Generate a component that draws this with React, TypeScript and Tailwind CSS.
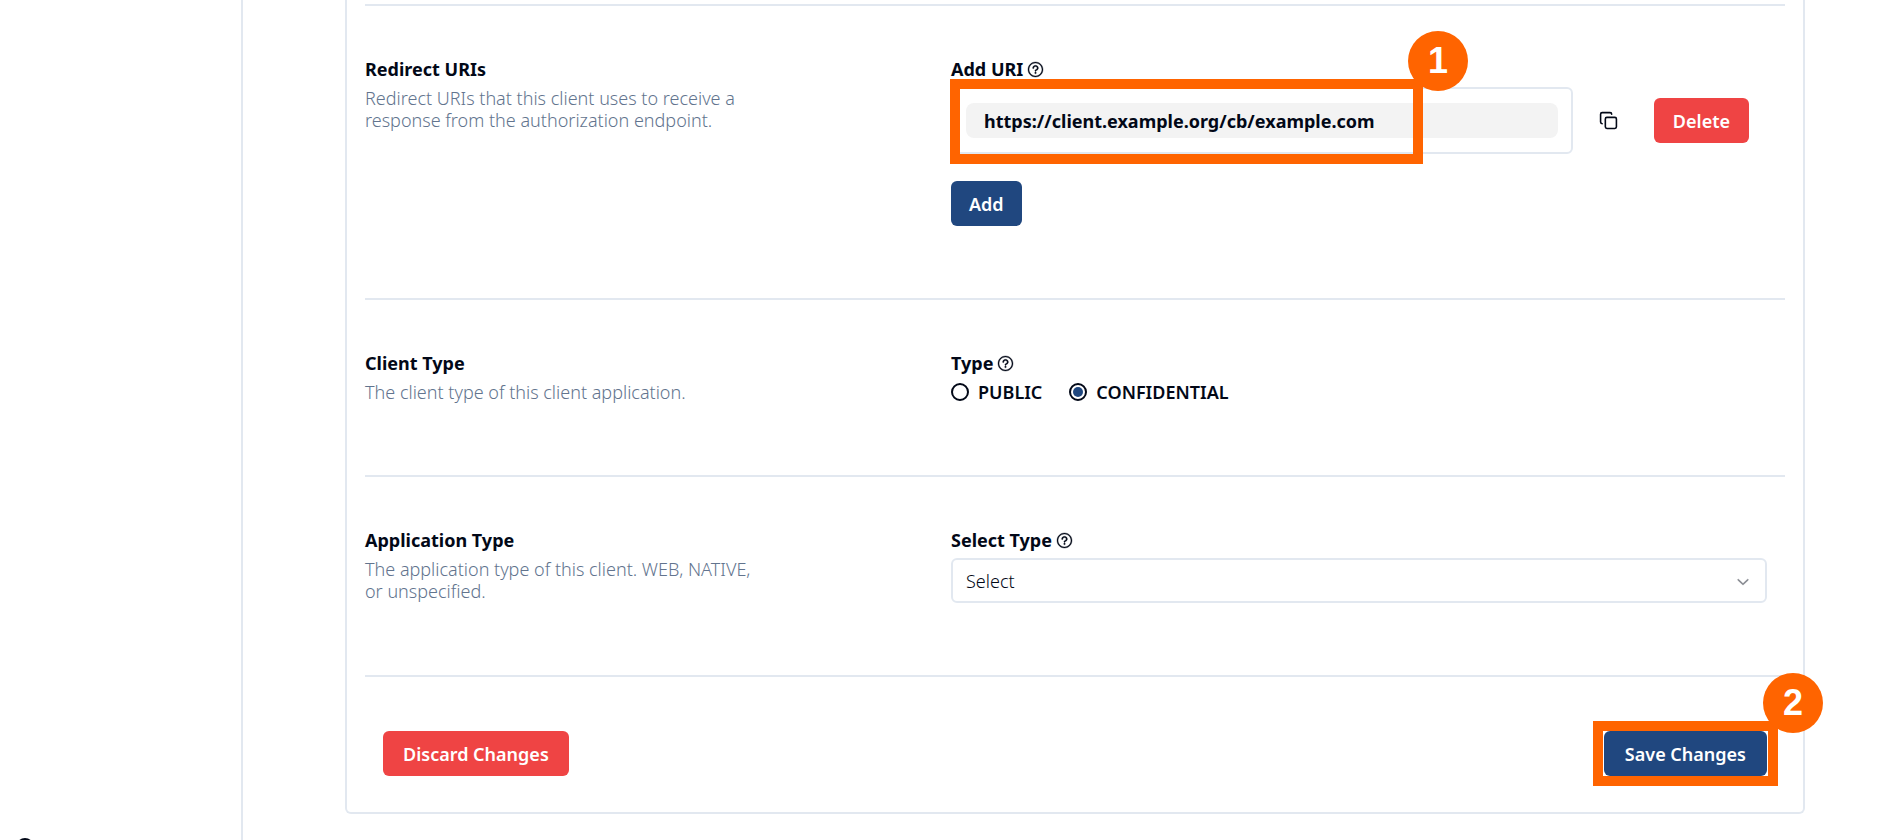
import React, { useState } from 'react';
import { Copy } from 'lucide-react';
import { RxChevronDown, RxQuestionMarkCircled } from 'react-icons/rx';

interface SectionProps {
  title: string;
  description: string;
  children: React.ReactNode;
}

const Section = ({ title, description, children }: SectionProps) => (
  <section className="flex border-t-2 border-slate-200 pt-[52px] pb-[72px] pr-[18px]">
    <div className="w-[586px] shrink-0">
      <h2 className="font-bold">{title}</h2>
      <p className="mt-[7px] max-w-[400px] font-light text-slate-500">{description}</p>
    </div>
    <div className="flex-1 min-w-0">{children}</div>
  </section>
);

const HelpIcon = () => (
  <RxQuestionMarkCircled className="size-[17px] stroke-current" strokeWidth="0.3" aria-hidden="true" />
);

const StepBadge = ({ step }: { step: number }) => (
  <span className="absolute -top-[58px] -right-[55px] flex size-[60px] items-center justify-center rounded-full bg-[#ff6400] font-['Liberation_Sans',sans-serif] text-4xl font-bold text-white">
    {step}
  </span>
);

const clientTypes = ['PUBLIC', 'CONFIDENTIAL'];

const App = () => {
  const [uri, setUri] = useState('https://client.example.org/cb/example.com');
  const [clientType, setClientType] = useState('CONFIDENTIAL');
  const [applicationType, setApplicationType] = useState('');

  return (
    <div className="flex h-screen bg-white font-['Noto_Sans',sans-serif] text-lg leading-[22px] text-[#020817]">
      <aside className="flex w-[243px] shrink-0 flex-col overflow-hidden border-r-2 border-slate-200">
        <div className="mt-auto h-0.5 pl-4">
          <svg width="18" height="18" viewBox="0 0 18 18" fill="none" stroke="currentColor" strokeWidth="2">
            <circle cx="9" cy="9" r="8" />
          </svg>
        </div>
      </aside>

      <main className="min-w-0 flex-1 overflow-y-auto pl-[102px] pr-[91px]">
        <div className="rounded-b-md border-2 border-t-0 border-slate-200 px-[18px] pt-1">
          <Section
            title="Redirect URIs"
            description="Redirect URIs that this client uses to receive a response from the authorization endpoint."
          >
            <label htmlFor="uri" className="flex items-center gap-1 font-bold">
              Add URI <HelpIcon />
            </label>
            <div className="relative mt-[7px] flex items-center pr-[18px]">
              <div className="flex h-[67px] min-w-0 flex-1 items-center rounded-md border-2 border-slate-200 px-[13px]">
                <input
                  id="uri"
                  value={uri}
                  onChange={(e) => setUri(e.target.value)}
                  className="h-[35px] w-full rounded-lg bg-[#f3f3f3] px-[18px] font-bold outline-none"
                />
              </div>
              <button aria-label="Copy" className="ml-[18px] flex size-9 items-center justify-center">
                <Copy className="size-[19px]" />
              </button>
              <button className="ml-[27px] h-[45px] rounded-md bg-[#ef4444] px-[19px] font-semibold text-white">
                Delete
              </button>
              {/* Step 1 highlight */}
              <div className="pointer-events-none absolute -top-2 -left-px h-[85px] w-[473px] border-10 border-[#ff6400]">
                <StepBadge step={1} />
              </div>
            </div>
            <button className="mt-[27px] h-[45px] rounded-md bg-[#20477f] px-[18px] font-semibold text-white">
              Add
            </button>
          </Section>

          <Section title="Client Type" description="The client type of this client application.">
            <div role="radiogroup" aria-labelledby="client-type">
              <div id="client-type" className="flex items-center gap-1 font-bold">
                Type <HelpIcon />
              </div>
              <div className="mt-[7px] flex gap-[27px]">
                {clientTypes.map((type) => (
                  <label key={type} className="flex items-center gap-[9px] font-semibold">
                    <input
                      type="radio"
                      name="clientType"
                      value={type}
                      checked={clientType === type}
                      onChange={() => setClientType(type)}
                      className="size-[18px] appearance-none rounded-full border-2 border-[#020817] p-0.5 checked:bg-[#20477f] checked:bg-clip-content"
                    />
                    {type}
                  </label>
                ))}
              </div>
            </div>
          </Section>

          <Section
            title="Application Type"
            description="The application type of this client. WEB, NATIVE, or unspecified."
          >
            <label htmlFor="application-type" className="flex items-center gap-1 font-bold">
              Select Type <HelpIcon />
            </label>
            <div className="relative mt-[7px]">
              <select
                id="application-type"
                value={applicationType}
                onChange={(e) => setApplicationType(e.target.value)}
                className="block h-[45px] w-full appearance-none rounded-md border-2 border-slate-200 bg-white px-[13px] font-light"
              >
                <option value="">Select</option>
                <option value="WEB">WEB</option>
                <option value="NATIVE">NATIVE</option>
              </select>
              <RxChevronDown
                className="pointer-events-none absolute inset-y-0 right-[15px] my-auto size-[18px] stroke-current opacity-50"
                strokeWidth="0.3"
              />
            </div>
          </Section>

          <footer className="flex justify-between border-t-2 border-slate-200 px-[18px] pt-[54px] pb-9">
            <button className="h-[45px] rounded-md bg-[#ef4444] px-5 font-semibold text-white">
              Discard Changes
            </button>
            <div className="relative">
              <button className="h-[45px] rounded-md bg-[#20477f] px-[21px] font-semibold text-white">
                Save Changes
              </button>
              {/* Step 2 highlight */}
              <div className="pointer-events-none absolute -inset-x-[11px] -top-2.5 -bottom-2.5 border-10 border-[#ff6400]">
                <StepBadge step={2} />
              </div>
            </div>
          </footer>
        </div>
      </main>
    </div>
  );
};

export default App;
